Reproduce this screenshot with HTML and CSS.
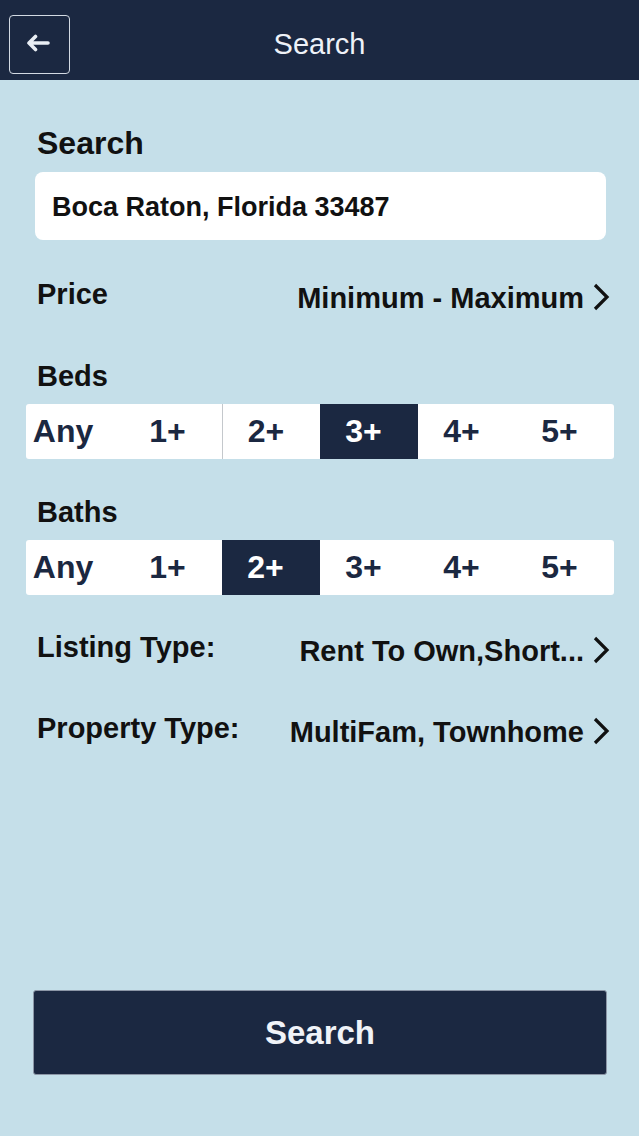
FILE: index.html
```html
<!DOCTYPE html>
<html lang="en">
<head>
<meta charset="utf-8">
<title>Search</title>
<link rel="stylesheet" href="styles.css">
</head>
<body>
<header class="topbar">
  <button class="back-btn" aria-label="Back">
    <svg width="26" height="18" viewBox="0 0 26 18"><path d="M4 9 H23 M10.5 2.5 L4 9 L10.5 15.5" fill="none" stroke="#e9eef4" stroke-width="3.6" stroke-linecap="round" stroke-linejoin="round"/></svg>
  </button>
  <h1 class="topbar-title">Search</h1>
  <span></span>
</header>
<main class="content">
  <h2 class="heading">Search</h2>
  <div class="search-input">Boca Raton, Florida 33487</div>

  <div class="row row-price">
    <span class="label">Price</span>
    <span class="value">Minimum - Maximum
      <svg class="chev" width="18" height="28" viewBox="0 0 18 28"><polyline points="3,2 15,14 3,26" fill="none" stroke="#111" stroke-width="3.2"/></svg>
    </span>
  </div>

  <div class="label section-label beds-label">Beds</div>
  <div class="seg">
    <span class="seg-item any">Any</span>
    <span class="seg-item">1+</span>
    <span class="seg-item divided">2+</span>
    <span class="seg-item selected">3+</span>
    <span class="seg-item">4+</span>
    <span class="seg-item">5+</span>
  </div>

  <div class="label section-label baths-label">Baths</div>
  <div class="seg">
    <span class="seg-item any">Any</span>
    <span class="seg-item">1+</span>
    <span class="seg-item selected">2+</span>
    <span class="seg-item">3+</span>
    <span class="seg-item">4+</span>
    <span class="seg-item">5+</span>
  </div>

  <div class="row row-listing">
    <span class="label">Listing Type:</span>
    <span class="value">Rent To Own,Short...
      <svg class="chev" width="18" height="28" viewBox="0 0 18 28"><polyline points="3,2 15,14 3,26" fill="none" stroke="#111" stroke-width="3.2"/></svg>
    </span>
  </div>

  <div class="row row-property">
    <span class="label">Property Type:</span>
    <span class="value">MultiFam, Townhome
      <svg class="chev" width="18" height="28" viewBox="0 0 18 28"><polyline points="3,2 15,14 3,26" fill="none" stroke="#111" stroke-width="3.2"/></svg>
    </span>
  </div>

  <button class="search-btn">Search</button>
</main>
</body>
</html>
```

FILE: styles.css
```css
* { box-sizing: border-box; }

html, body {
  margin: 0;
  padding: 0;
}

body {
  width: 639px;
  height: 1136px;
  background: #c5dfe9;
  font-family: "Liberation Sans", Arial, sans-serif;
  color: #111;
  display: flex;
  flex-direction: column;
  overflow: hidden;
}

.topbar {
  height: 80px;
  flex: none;
  background: #1b2841;
  display: grid;
  grid-template-columns: 1fr auto 1fr;
  align-items: center;
  padding-top: 8px;
}

.back-btn {
  justify-self: start;
  margin-left: 9px;
  width: 61px;
  height: 59px;
  background: transparent;
  border: 1.5px solid #d3dae3;
  border-radius: 4px;
  display: flex;
  align-items: center;
  justify-content: center;
  padding: 0 4px 2px 0;
}

.topbar-title {
  margin: 0;
  font-size: 29px;
  font-weight: normal;
  color: #eef2f8;
  line-height: 32px;
}

.content {
  flex: 1;
  display: flex;
  flex-direction: column;
  padding-bottom: 61px;
}

.heading {
  margin: 45px 0 0 37px;
  font-size: 32px;
  line-height: 36px;
  font-weight: bold;
}

.search-input {
  margin: 11px 33px 0 35px;
  height: 68px;
  background: #fff;
  border-radius: 8px;
  padding-left: 17px;
  font-size: 27px;
  font-weight: bold;
  line-height: 70px;
  color: #111;
}

.label {
  font-size: 29px;
  line-height: 32px;
  font-weight: bold;
  color: #111;
}

.row {
  display: flex;
  justify-content: space-between;
  align-items: flex-start;
  padding: 0 29px 0 37px;
}

.row-price { margin-top: 38px; }
.row-listing { margin-top: 36px; }
.row-property { margin-top: 45px; }

.value {
  display: flex;
  align-items: center;
  gap: 8px;
  font-size: 29px;
  line-height: 32px;
  font-weight: bold;
  padding-top: 4px;
  white-space: nowrap;
}

.chev {
  flex: none;
  margin-top: -3px;
}

.section-label {
  margin-left: 37px;
}

.beds-label { margin-top: 46px; }
.baths-label { margin-top: 37px; }

.seg {
  margin: 12px 25px 0 26px;
  height: 55px;
  display: grid;
  grid-template-columns: repeat(6, 1fr);
  background: #fff;
  border-radius: 3px;
  overflow: hidden;
}

.seg-item {
  display: flex;
  align-items: center;
  justify-content: center;
  padding-right: 11px;
  font-size: 32px;
  font-weight: bold;
  color: #1b2841;
  line-height: 55px;
}

.seg-item.any {
  padding-right: 24px;
}

.seg-item.divided {
  border-left: 1px solid #c4c8cc;
}

.seg-item.selected {
  background: #1b2841;
  color: #fff;
}

.search-btn {
  margin: auto 32px 0 33px;
  height: 85px;
  background: #1b2841;
  border: 1px solid #8c96a6;
  border-radius: 3px;
  color: #f0f3f8;
  font-family: "Liberation Sans", Arial, sans-serif;
  font-size: 33px;
  font-weight: bold;
}
```
